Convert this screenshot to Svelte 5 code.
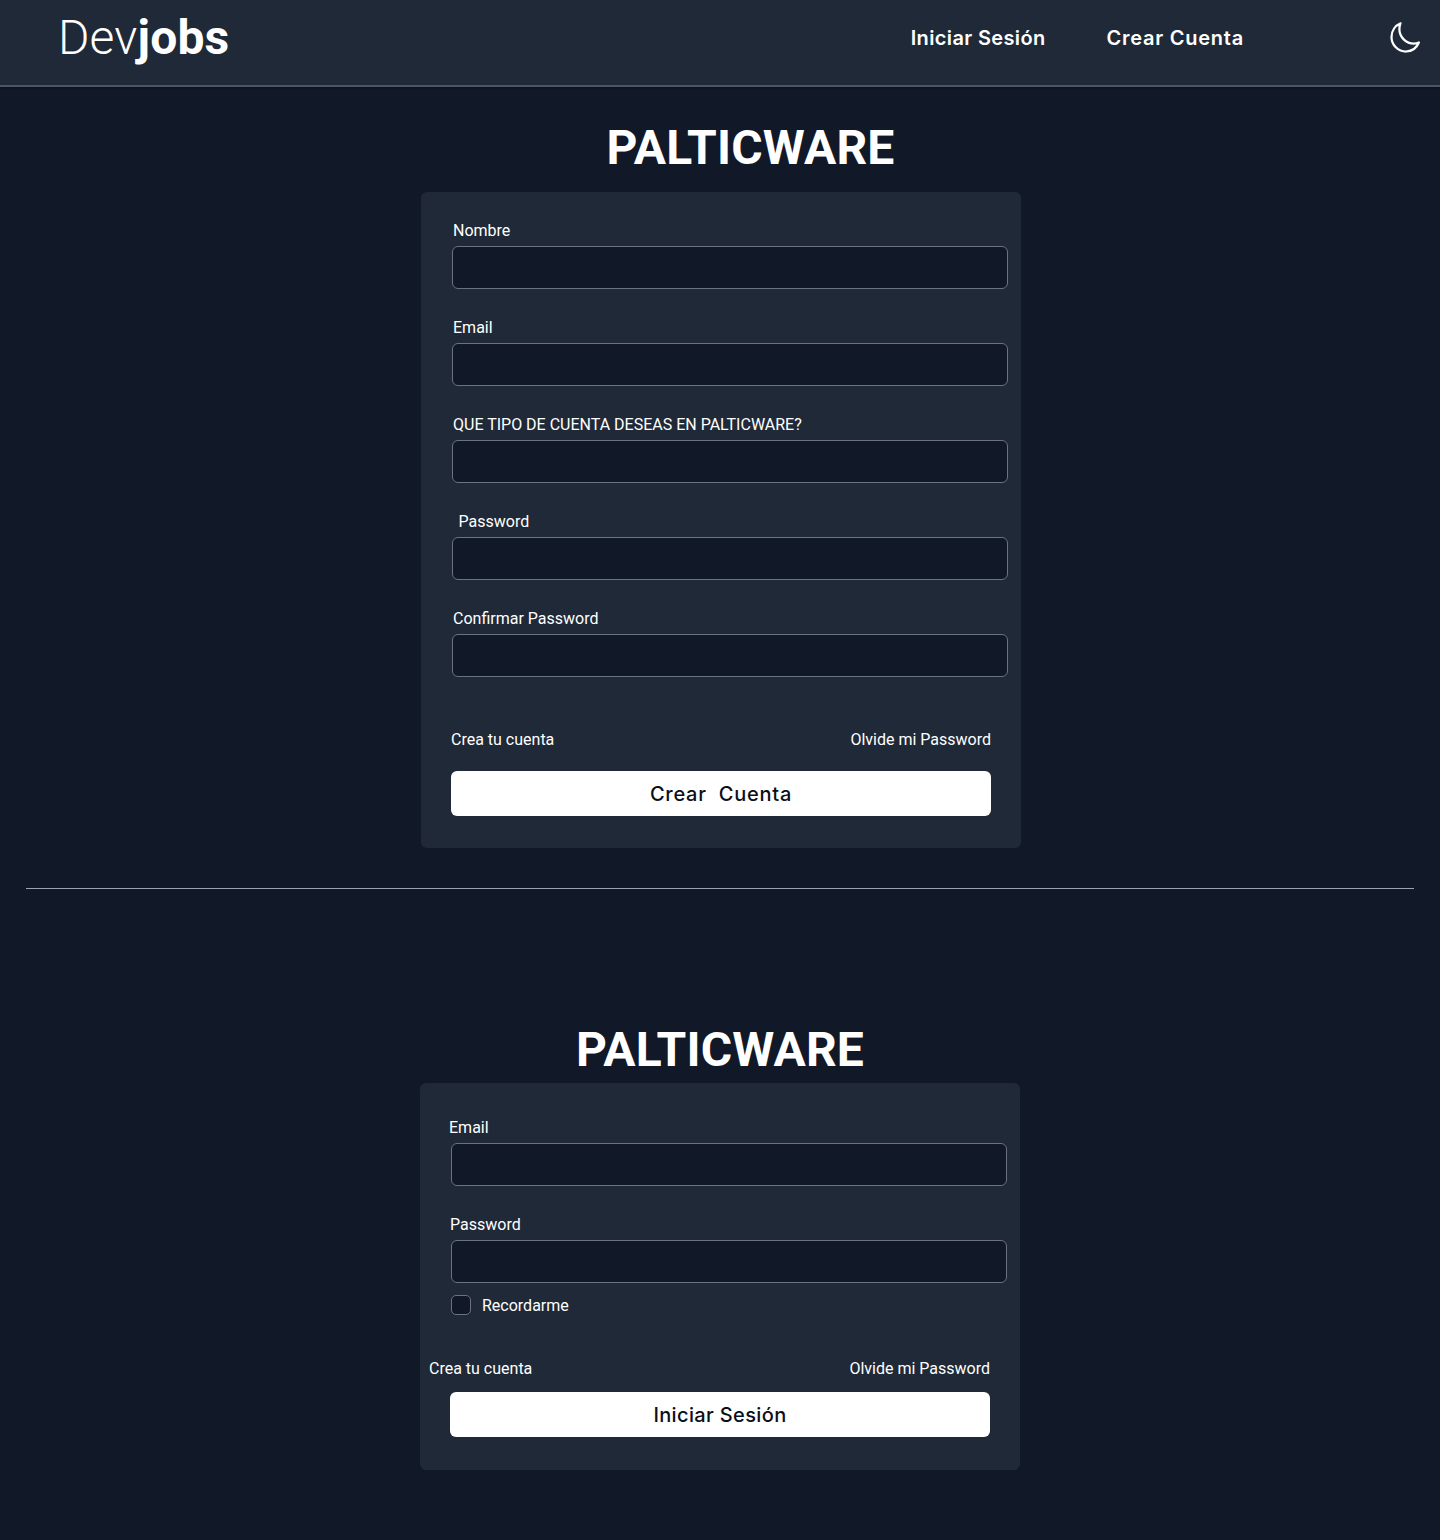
<script>
  const registerFields = [
    { label: 'Nombre', type: 'text' },
    { label: 'Email', type: 'email' },
    { label: 'QUE TIPO DE CUENTA DESEAS EN PALTICWARE?', type: 'text' },
    { label: 'Password', type: 'password', indent: true },
    { label: 'Confirmar Password', type: 'password' }
  ];
</script>

<header class="nav">
  <a class="logo" href="#top">Dev<strong>jobs</strong></a>
  <nav class="links">
    <a class="narrow" href="#login">Iniciar Sesión</a>
    <a class="wide" href="#register">Crear Cuenta</a>
  </nav>
  <button class="theme" aria-label="Tema">
    <svg viewBox="0 0 24 24" width="36" height="36" fill="none" stroke="currentColor" stroke-width="1.5" stroke-linecap="round" stroke-linejoin="round">
      <path d="M21.25 15A9.72 9.72 0 0 1 18 15.75 9.75 9.75 0 0 1 8.25 6c0-1.33.27-2.6.75-3.75A9.75 9.75 0 0 0 3 11.25 9.75 9.75 0 0 0 12.75 21a9.75 9.75 0 0 0 8.5-6z" />
    </svg>
  </button>
</header>

<main>
  <section class="block first">
    <h1 class="title shifted">PALTICWARE</h1>
    <form class="card register">
      {#each registerFields as f}
        <div class="field">
          <label class:indent={f.indent}>
            <span>{f.label}</span>
            <input type={f.type} />
          </label>
        </div>
      {/each}
      <div class="row">
        <a href="#register">Crea tu cuenta</a>
        <a href="#forgot">Olvide mi Password</a>
      </div>
      <button class="submit wide" type="button">Crear&nbsp; Cuenta</button>
    </form>
  </section>

  <hr />

  <section class="block second">
    <h1 class="title">PALTICWARE</h1>
    <form class="card login">
      <div class="field">
        <label class="l-email"><span>Email</span><input type="email" /></label>
      </div>
      <div class="field">
        <label><span>Password</span><input type="password" /></label>
      </div>
      <label class="remember">
        <span class="box"></span>
        <span>Recordarme</span>
      </label>
      <div class="row">
        <a class="out" href="#register">Crea tu cuenta</a>
        <a href="#forgot">Olvide mi Password</a>
      </div>
      <button class="submit narrow" type="button">Iniciar Sesión</button>
    </form>
  </section>
</main>

<style>
  :global(body) {
    margin: 0;
    background: #111827;
    color: #fff;
    font-family: Roboto, "Liberation Sans", sans-serif;
  }
  a { color: inherit; text-decoration: none; }

  .nav {
    box-sizing: border-box;
    height: 87px;
    background: #1f2937;
    border-bottom: 2px solid #4b5563;
    box-shadow: 0 1px 2px rgba(0, 0, 0, 0.3);
    display: flex;
    align-items: center;
    padding: 0 17px 9px 58px;
  }
  .logo { font-size: 48px; font-weight: 300; line-height: 56px; letter-spacing: 0.15px; }
  .logo strong { font-weight: 700; }
  .links {
    margin-left: auto;
    display: flex;
    gap: 61px;
    font-family: Inter, "Open Sans", sans-serif;
    font-size: 20px;
    font-weight: 600;
  }
  .narrow { letter-spacing: 0.36px; }
  .wide { letter-spacing: 0.75px; }
  .theme {
    margin-left: 143px;
    background: none;
    border: 0;
    padding: 0;
    color: #fff;
    display: flex;
    align-items: center;
  }

  .block { display: flex; flex-direction: column; align-items: center; }
  .first { padding-top: 33px; }
  .second { padding-top: 133px; padding-bottom: 70px; }

  .title {
    margin: 0 0 16px;
    font-size: 48px;
    line-height: 56px;
    font-weight: 700;
    letter-spacing: 0.2px;
    text-align: center;
  }
  .shifted { transform: translateX(30.5px); }

  .card {
    box-sizing: border-box;
    width: 600px;
    background: #1f2937;
    border-radius: 6px;
    display: flex;
    flex-direction: column;
  }
  .register { margin-left: 2px; padding: 27px 30px 32px; }
  .login { margin-top: -11px; padding: 33px 30px 33px; }

  .field { margin-bottom: 27px; }
  .field label { display: block; font-size: 16px; line-height: 19px; }
  .field label span { display: block; margin: 2px 0 6px 2px; }
  .field label.indent span { margin-left: 7.5px; }
  .field input {
    box-sizing: border-box;
    display: block;
    width: 556px;
    height: 43px;
    margin-left: 1px;
    background: #111827;
    border: 1px solid #6b7280;
    border-radius: 6px;
  }
  .login .field label span { margin-left: 0; }
  .login .field label.l-email span { margin-left: -1px; }

  .row {
    display: flex;
    justify-content: space-between;
    font-size: 16px;
    line-height: 19px;
    margin-top: 26px;
    margin-bottom: 22px;
  }
  .out { margin-left: -21px; }
  .submit {
    height: 45px;
    border: 0;
    border-radius: 6px;
    background: #fff;
    color: #0b0f19;
    font-family: Inter, "Open Sans", sans-serif;
    font-size: 20px;
    font-weight: 500;
  }

  hr {
    margin: 40px 26px 0;
    border: 0;
    border-top: 1px solid #9ca3af;
  }

  .remember {
    display: flex;
    align-items: center;
    gap: 11px;
    font-size: 16px;
    margin: -15px 0 0 1px;
    height: 20px;
  }
  .box {
    box-sizing: border-box;
    width: 20px;
    height: 20px;
    background: #111827;
    border: 1px solid #6b7280;
    border-radius: 5px;
  }
  .login .row { margin-top: 44px; margin-bottom: 14px; }
</style>
